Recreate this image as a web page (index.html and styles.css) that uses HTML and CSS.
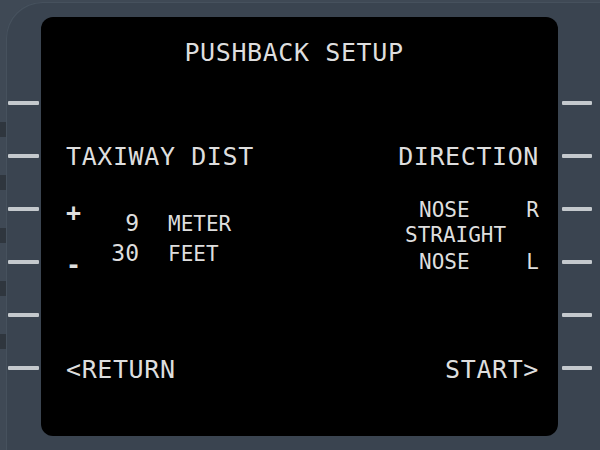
FILE: index.html
```html
<!DOCTYPE html>
<html>
<head>
<meta charset="utf-8">
<link rel="stylesheet" href="styles.css">
</head>
<body>
<div class="edge">
  <div class="notch"></div><div class="notch"></div><div class="notch"></div><div class="notch"></div><div class="notch"></div>
</div>
<div class="bezel">
  <div class="ticks left">
    <div class="tick"></div><div class="tick"></div><div class="tick"></div><div class="tick"></div><div class="tick"></div><div class="tick"></div>
  </div>
  <div class="screen">
    <div class="title big">PUSHBACK SETUP</div>
    <div class="heads big">
      <span>TAXIWAY DIST</span>
      <span>DIRECTION</span>
    </div>
    <div class="middle">
      <div class="dist">
        <div class="signs">
          <div class="sign plus">+</div>
          <div class="sign minus">-</div>
        </div>
        <div class="values">
          <div class="vrow"><span class="num">9</span><span class="unit">METER</span></div>
          <div class="vrow second"><span class="num">30</span><span class="unit">FEET</span></div>
        </div>
      </div>
      <div class="dir small">
        <div class="drow"><span class="nose">NOSE</span><span>R</span></div>
        <div class="drow straight"><span>STRAIGHT</span></div>
        <div class="drow last"><span class="nose">NOSE</span><span>L</span></div>
      </div>
    </div>
    <div class="foot big">
      <span>&lt;RETURN</span>
      <span>START&gt;</span>
    </div>
  </div>
  <div class="ticks right">
    <div class="tick"></div><div class="tick"></div><div class="tick"></div><div class="tick"></div><div class="tick"></div><div class="tick"></div>
  </div>
</div>
</body>
</html>
```
FILE: styles.css
```css
html, body {
  margin: 0;
  padding: 0;
}
body {
  width: 600px;
  height: 450px;
  overflow: hidden;
  background: #3f4955;
  display: flex;
  font-family: "DejaVu Sans Mono", monospace;
  color: #dedede;
}
.edge {
  width: 6px;
  padding-top: 122px;
  display: flex;
  flex-direction: column;
  gap: 38px;
}
.notch {
  width: 6px;
  height: 15px;
  background: #2f363e;
}
.bezel {
  width: 594px;
  height: 448px;
  margin-top: 2px;
  background: #3a4450;
  border-radius: 36px 0 0 0;
  box-shadow: inset 1px 1px 0 #46515d;
  display: flex;
}
.ticks {
  display: flex;
  flex-direction: column;
  gap: 49px;
  padding-top: 99px;
}
.ticks.left {
  width: 33px;
  padding-left: 2px;
}
.ticks.right {
  padding-left: 4px;
}
.tick {
  width: 31px;
  height: 4px;
  border-radius: 1px;
  background: #c4c9cd;
}
.ticks.right .tick {
  width: 30px;
}
.screen {
  width: 517px;
  height: 419px;
  margin-top: 15px;
  background: #000;
  border-radius: 12px;
  box-sizing: border-box;
  padding: 23px 19px 0 25px;
  display: flex;
  flex-direction: column;
}
.big {
  font-size: 25px;
  line-height: 25px;
  letter-spacing: 0.6px;
}
.small {
  font-size: 21px;
  line-height: 21px;
}
.title {
  text-align: center;
  padding-right: 17px;
}
.heads {
  margin-top: 79px;
  display: flex;
  justify-content: space-between;
}
.middle {
  margin-top: 30px;
  display: flex;
  justify-content: space-between;
  align-items: flex-start;
}
.dist {
  display: flex;
}
.signs {
  width: 34px;
}
.sign {
  font-size: 25px;
  line-height: 25px;
  font-weight: bold;
}
.plus {
  margin-top: 0.5px;
}
.minus {
  margin-top: 27.5px;
}
.values {
  padding-top: 12.5px;
}
.vrow {
  display: flex;
  align-items: baseline;
  height: 23px;
}
.vrow.second {
  margin-top: 7px;
}
.num {
  width: 39px;
  text-align: right;
  font-size: 23px;
  line-height: 23px;
}
.unit {
  margin-left: 29px;
  font-size: 21px;
  line-height: 21px;
}
.dir {
  width: 134px;
  padding-top: 1px;
}
.drow {
  display: flex;
  justify-content: space-between;
}
.drow.straight {
  margin-top: 4px;
}
.drow.last {
  margin-top: 6px;
}
.nose {
  margin-left: 14px;
}
.foot {
  margin-top: 80px;
  display: flex;
  justify-content: space-between;
}
```
